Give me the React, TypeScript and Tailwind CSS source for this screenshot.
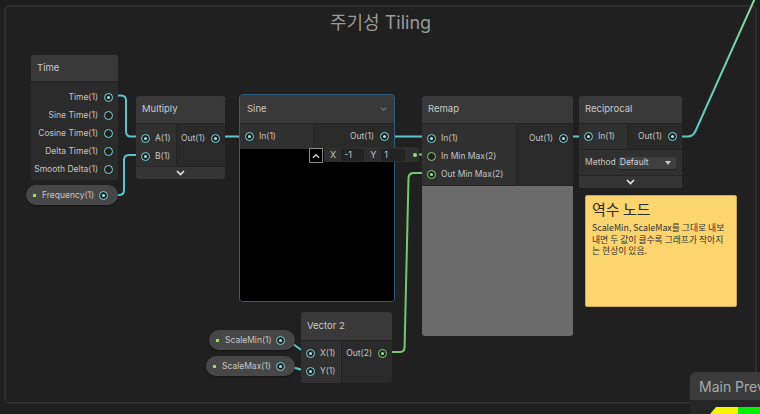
import React from "react";

type PC = "cyan" | "green";

function Port({ c = "cyan", on = true }: { c?: PC; on?: boolean }) {
  const ring = c === "cyan" ? "border-[#7fd6dc]" : "border-[#82d77a]";
  const dot = c === "cyan" ? "bg-[#9be6ea]" : "bg-[#9ce495]";
  return (
    <span
      className={`flex items-center justify-center w-[9px] h-[9px] rounded-full border-[1.5px] ${ring} bg-[#1f1f1f] shrink-0`}
    >
      {on && <span className={`w-[3px] h-[3px] rounded-full ${dot}`} />}
    </span>
  );
}

function InRow({ label, c = "cyan", on = true }: { label: string; c?: PC; on?: boolean }) {
  return (
    <div className="flex items-center h-[18px] gap-[5px] pl-[5px] whitespace-nowrap">
      <Port c={c} on={on} />
      <span>{label}</span>
    </div>
  );
}

function OutRow({ label, c = "cyan", on = true }: { label: string; c?: PC; on?: boolean }) {
  return (
    <div className="flex items-center justify-end h-[18px] gap-[6px] pr-[5px] whitespace-nowrap">
      <span>{label}</span>
      <Port c={c} on={on} />
    </div>
  );
}

function Chevron({ up = false, cls = "" }: { up?: boolean; cls?: string }) {
  return (
    <svg width="9" height="6" viewBox="0 0 9 6" className={cls}>
      <polyline
        points={up ? "1,5 4.5,1.5 8,5" : "1,1 4.5,4.5 8,1"}
        fill="none"
        stroke="currentColor"
        strokeWidth="1.6"
      />
    </svg>
  );
}

function Header({ title, h = "h-[27px]" }: { title: string; h?: string }) {
  return (
    <div className={`${h} bg-[#393939] flex items-center px-[6px] text-[9.5px] text-[#c9c9c9]`}>
      {title}
    </div>
  );
}

function CollapseBar() {
  return (
    <div className="h-[13px] bg-[#353535] border-t border-[#262626] flex items-center justify-center text-[#e6e6e6]">
      <Chevron />
    </div>
  );
}

function Pill({ label, cls }: { label: string; cls: string }) {
  return (
    <div
      className={`absolute ${cls} h-[20px] rounded-full bg-[#474747] flex items-center pl-[7px] pr-[10px] text-[8.5px] text-[#c6c6c6] shadow-[0_1px_2px_rgba(0,0,0,0.4)]`}
    >
      <span className="w-[3px] h-[3px] bg-[#8fe34f] shrink-0" />
      <span className="ml-[6px] whitespace-nowrap">{label}</span>
      <span className="ml-auto">
        <Port c="cyan" on />
      </span>
    </div>
  );
}

export default function App() {
  return (
    <div className="relative w-[760px] h-[414px] overflow-hidden bg-[#1e1e1e] font-['Inter','Noto_Sans_CJK_KR',sans-serif] text-[8.5px] text-[#c4c4c4]">
      {/* group box */}
      <div className="absolute left-[4px] top-[5px] w-[753px] h-[399px] rounded-[5px] border-2 border-[#2c2c2c] bg-[#202020]">
        <div className="flex justify-center pt-[2px] text-[18px] text-[#9a9a9a]">주기성 Tiling</div>
      </div>

      {/* wires */}
      <svg className="absolute left-0 top-0" width="760" height="414" viewBox="0 0 760 414">
        <defs>
          <linearGradient id="gw" x1="0" y1="1" x2="0" y2="0">
            <stop offset="0" stopColor="#5fc6c9" />
            <stop offset="1" stopColor="#86d99a" />
          </linearGradient>
        </defs>
        <g fill="none" strokeWidth="2" strokeLinecap="round">
          <path d="M109 95.5 L121 95.5 Q126 95.5 126 100.5 L126 131.5 Q126 136.5 131 136.5 L145 136.5" stroke="#5fc3cf" />
          <path d="M103 195 L119 195 Q124 195 124 190 L124 160 Q124 155 129 155 L145 155" stroke="#5fc3cf" />
          <path d="M216 136.5 L250 136.5" stroke="#5fc3cf" />
          <path d="M383 136.5 L431 136.5" stroke="#5fc3cf" />
          <path d="M564 136.5 L588 136.5" stroke="#5fc3cf" />
          <path d="M410 154.5 L431 154.5" stroke="#74c970" />
          <path d="M383 352 L400 352 Q404.5 352 404.6 347 L408.5 178 Q408.7 173 414 173 L431 173" stroke="#74c970" />
          <path d="M280 339.5 C295 339.5 296 352 311 352" stroke="#5fc3cf" />
          <path d="M280 365 C295 365 296 371 311 371" stroke="#5fc3cf" />
          <path d="M673 136.5 L688 136.5 Q693 136.5 695.5 131 L756 -4" stroke="url(#gw)" />
        </g>
      </svg>

      {/* Time node */}
      <div className="absolute left-[31px] top-[55px] w-[87px] rounded-[3px] overflow-hidden bg-[#2b2b2b]">
        <Header title="Time" h="h-[26px]" />
        <div className="pt-[6px] pb-[2px] border-t border-[#242424]">
          <OutRow label="Time(1)" on />
          <OutRow label="Sine Time(1)" on={false} />
          <OutRow label="Cosine Time(1)" on={false} />
          <OutRow label="Delta Time(1)" on={false} />
          <OutRow label="Smooth Delta(1)" on={false} />
        </div>
      </div>

      {/* Multiply */}
      <div className="absolute left-[136px] top-[96px] w-[89px] rounded-[3px] overflow-hidden bg-[#2a2a2a]">
        <Header title="Multiply" />
        <div className="flex h-[43px] border-t border-[#242424]">
          <div className="w-[40px] bg-[#303030] pt-[5px]">
            <InRow label="A(1)" />
            <InRow label="B(1)" />
          </div>
          <div className="flex-1 pt-[5px] border-l border-[#242424]">
            <OutRow label="Out(1)" />
          </div>
        </div>
        <CollapseBar />
      </div>

      {/* Sine */}
      <div className="absolute left-[239px] top-[94px] w-[156px] h-[208px] rounded-[4px] overflow-hidden border border-[#2d5d7c] bg-[#2a2a2a] flex flex-col">
        <div className="h-[28px] bg-[#393939] flex items-center justify-between px-[7px] text-[9.5px] text-[#c9c9c9]">
          <span>Sine</span>
          <Chevron cls="text-[#6f6f6f] w-[7px]" />
        </div>
        <div className="flex h-[26px] border-t border-[#242424]">
          <div className="w-[73px] bg-[#303030] flex items-center">
            <InRow label="In(1)" />
          </div>
          <div className="flex-1 border-l border-[#242424] flex items-center justify-end">
            <OutRow label="Out(1)" />
          </div>
        </div>
        <div className="flex-1 bg-black" />
      </div>

      {/* inline X/Y field */}
      <div className="absolute left-[309px] top-[148px] w-[14px] h-[15px] border border-[#8a8a8a] bg-black flex items-center justify-center text-[#d0d0d0]">
        <Chevron up cls="w-[8px]" />
      </div>
      <div className="absolute left-[324px] top-[147px] w-[95px] h-[15px] rounded-[2px] bg-[#2e2e2e] flex items-center text-[9px] text-[#c4c4c4]">
        <span className="ml-[6px]">X</span>
        <span className="ml-[5px] w-[23px] h-[12px] rounded-[2px] bg-[#232323] flex items-center pl-[3px]">-1</span>
        <span className="ml-[6px]">Y</span>
        <span className="ml-[5px] w-[24px] h-[12px] rounded-[2px] bg-[#232323] flex items-center pl-[3px]">1</span>
        <span className="ml-[8px] w-[4px] h-[4px] rounded-full bg-[#8fe36a]" />
      </div>

      {/* Remap */}
      <div className="absolute left-[422px] top-[96px] w-[151px] h-[240px] rounded-[3px] overflow-hidden bg-[#2a2a2a] flex flex-col">
        <Header title="Remap" />
        <div className="flex h-[62px] border-t border-[#242424]">
          <div className="w-[94px] bg-[#303030] pt-[5px]">
            <InRow label="In(1)" />
            <InRow label="In Min Max(2)" c="green" on={false} />
            <InRow label="Out Min Max(2)" c="green" />
          </div>
          <div className="flex-1 pt-[5px] border-l border-[#242424]">
            <OutRow label="Out(1)" />
          </div>
        </div>
        <div className="flex-1 bg-[#6b6b6b] border-t border-[#252525]" />
      </div>

      {/* Reciprocal */}
      <div className="absolute left-[579px] top-[96px] w-[103px] rounded-[3px] overflow-hidden bg-[#2a2a2a]">
        <Header title="Reciprocal" />
        <div className="flex h-[26px] border-t border-[#242424]">
          <div className="w-[48px] bg-[#303030] flex items-center">
            <InRow label="In(1)" />
          </div>
          <div className="flex-1 border-l border-[#242424] flex items-center justify-end">
            <OutRow label="Out(1)" />
          </div>
        </div>
        <div className="h-[26px] bg-[#303030] border-t border-[#242424] flex items-center pl-[6px] pr-[6px] text-[#c4c4c4]">
          <span>Method</span>
          <div className="ml-[2px] w-[58px] h-[12px] rounded-[2px] bg-[#3f3f3f] shadow-[0_1px_0_#222] flex items-center justify-between pl-[2px] pr-[5px] text-[8.5px] text-[#d2d2d2]">
            <span>Default</span>
            <svg width="6" height="4" viewBox="0 0 6 4">
              <polygon points="0,0 6,0 3,4" fill="#c8c8c8" />
            </svg>
          </div>
        </div>
        <CollapseBar />
      </div>

      {/* Sticky note */}
      <div className="absolute left-[585px] top-[195px] w-[152px] h-[112px] rounded-[2px] bg-[#fcd56f] border border-[#c9a94f] px-[6px] pt-[2px] text-[#2a2a2a] font-['Noto_Sans_CJK_KR','Inter',sans-serif]">
        <div className="text-[15px] leading-[22px] text-[#2b2b2b]">역수 노드</div>
        <div className="mt-[2px] text-[8.8px] leading-[11.5px] text-[#333] whitespace-nowrap">
          ScaleMin, ScaleMax를 그대로 내보
          <br />
          내면 두 값이 클수록 그래프가 작아지
          <br />는 현상이 있음.
        </div>
      </div>

      {/* Vector 2 */}
      <div className="absolute left-[301px] top-[312px] w-[91px] rounded-[3px] overflow-hidden bg-[#2a2a2a]">
        <Header title="Vector 2" h="h-[28px]" />
        <div className="flex h-[43px] border-t border-[#242424]">
          <div className="w-[40px] bg-[#303030] pt-[3px]">
            <InRow label="X(1)" />
            <InRow label="Y(1)" />
          </div>
          <div className="flex-1 pt-[3px] border-l border-[#242424]">
            <OutRow label="Out(2)" c="green" />
          </div>
        </div>
      </div>

      {/* Property pills */}
      <Pill label="Frequency(1)" cls="left-[26px] top-[185px] w-[92px]" />
      <Pill label="ScaleMin(1)" cls="left-[209px] top-[330px] w-[86px]" />
      <Pill label="ScaleMax(1)" cls="left-[206px] top-[356px] w-[89px]" />

      {/* Main preview */}
      <div className="absolute left-[690px] top-[372px] w-[70px] h-[42px] rounded-tl-[6px] overflow-hidden bg-[#262626] flex flex-col">
        <div className="h-[28px] bg-[#3b3b3b] flex items-center pl-[9px] text-[14px] text-[#a9a9a9] whitespace-nowrap">
          Main Preview
        </div>
        <div className="relative flex-1">
          <svg className="absolute left-0 top-0" width="70" height="14" viewBox="0 0 70 14">
            <polygon points="20,14 26,7 48,7 48,14" fill="#f5f500" />
            <rect x="48" y="7" width="22" height="7" fill="#00f000" />
          </svg>
        </div>
      </div>
    </div>
  );
}
